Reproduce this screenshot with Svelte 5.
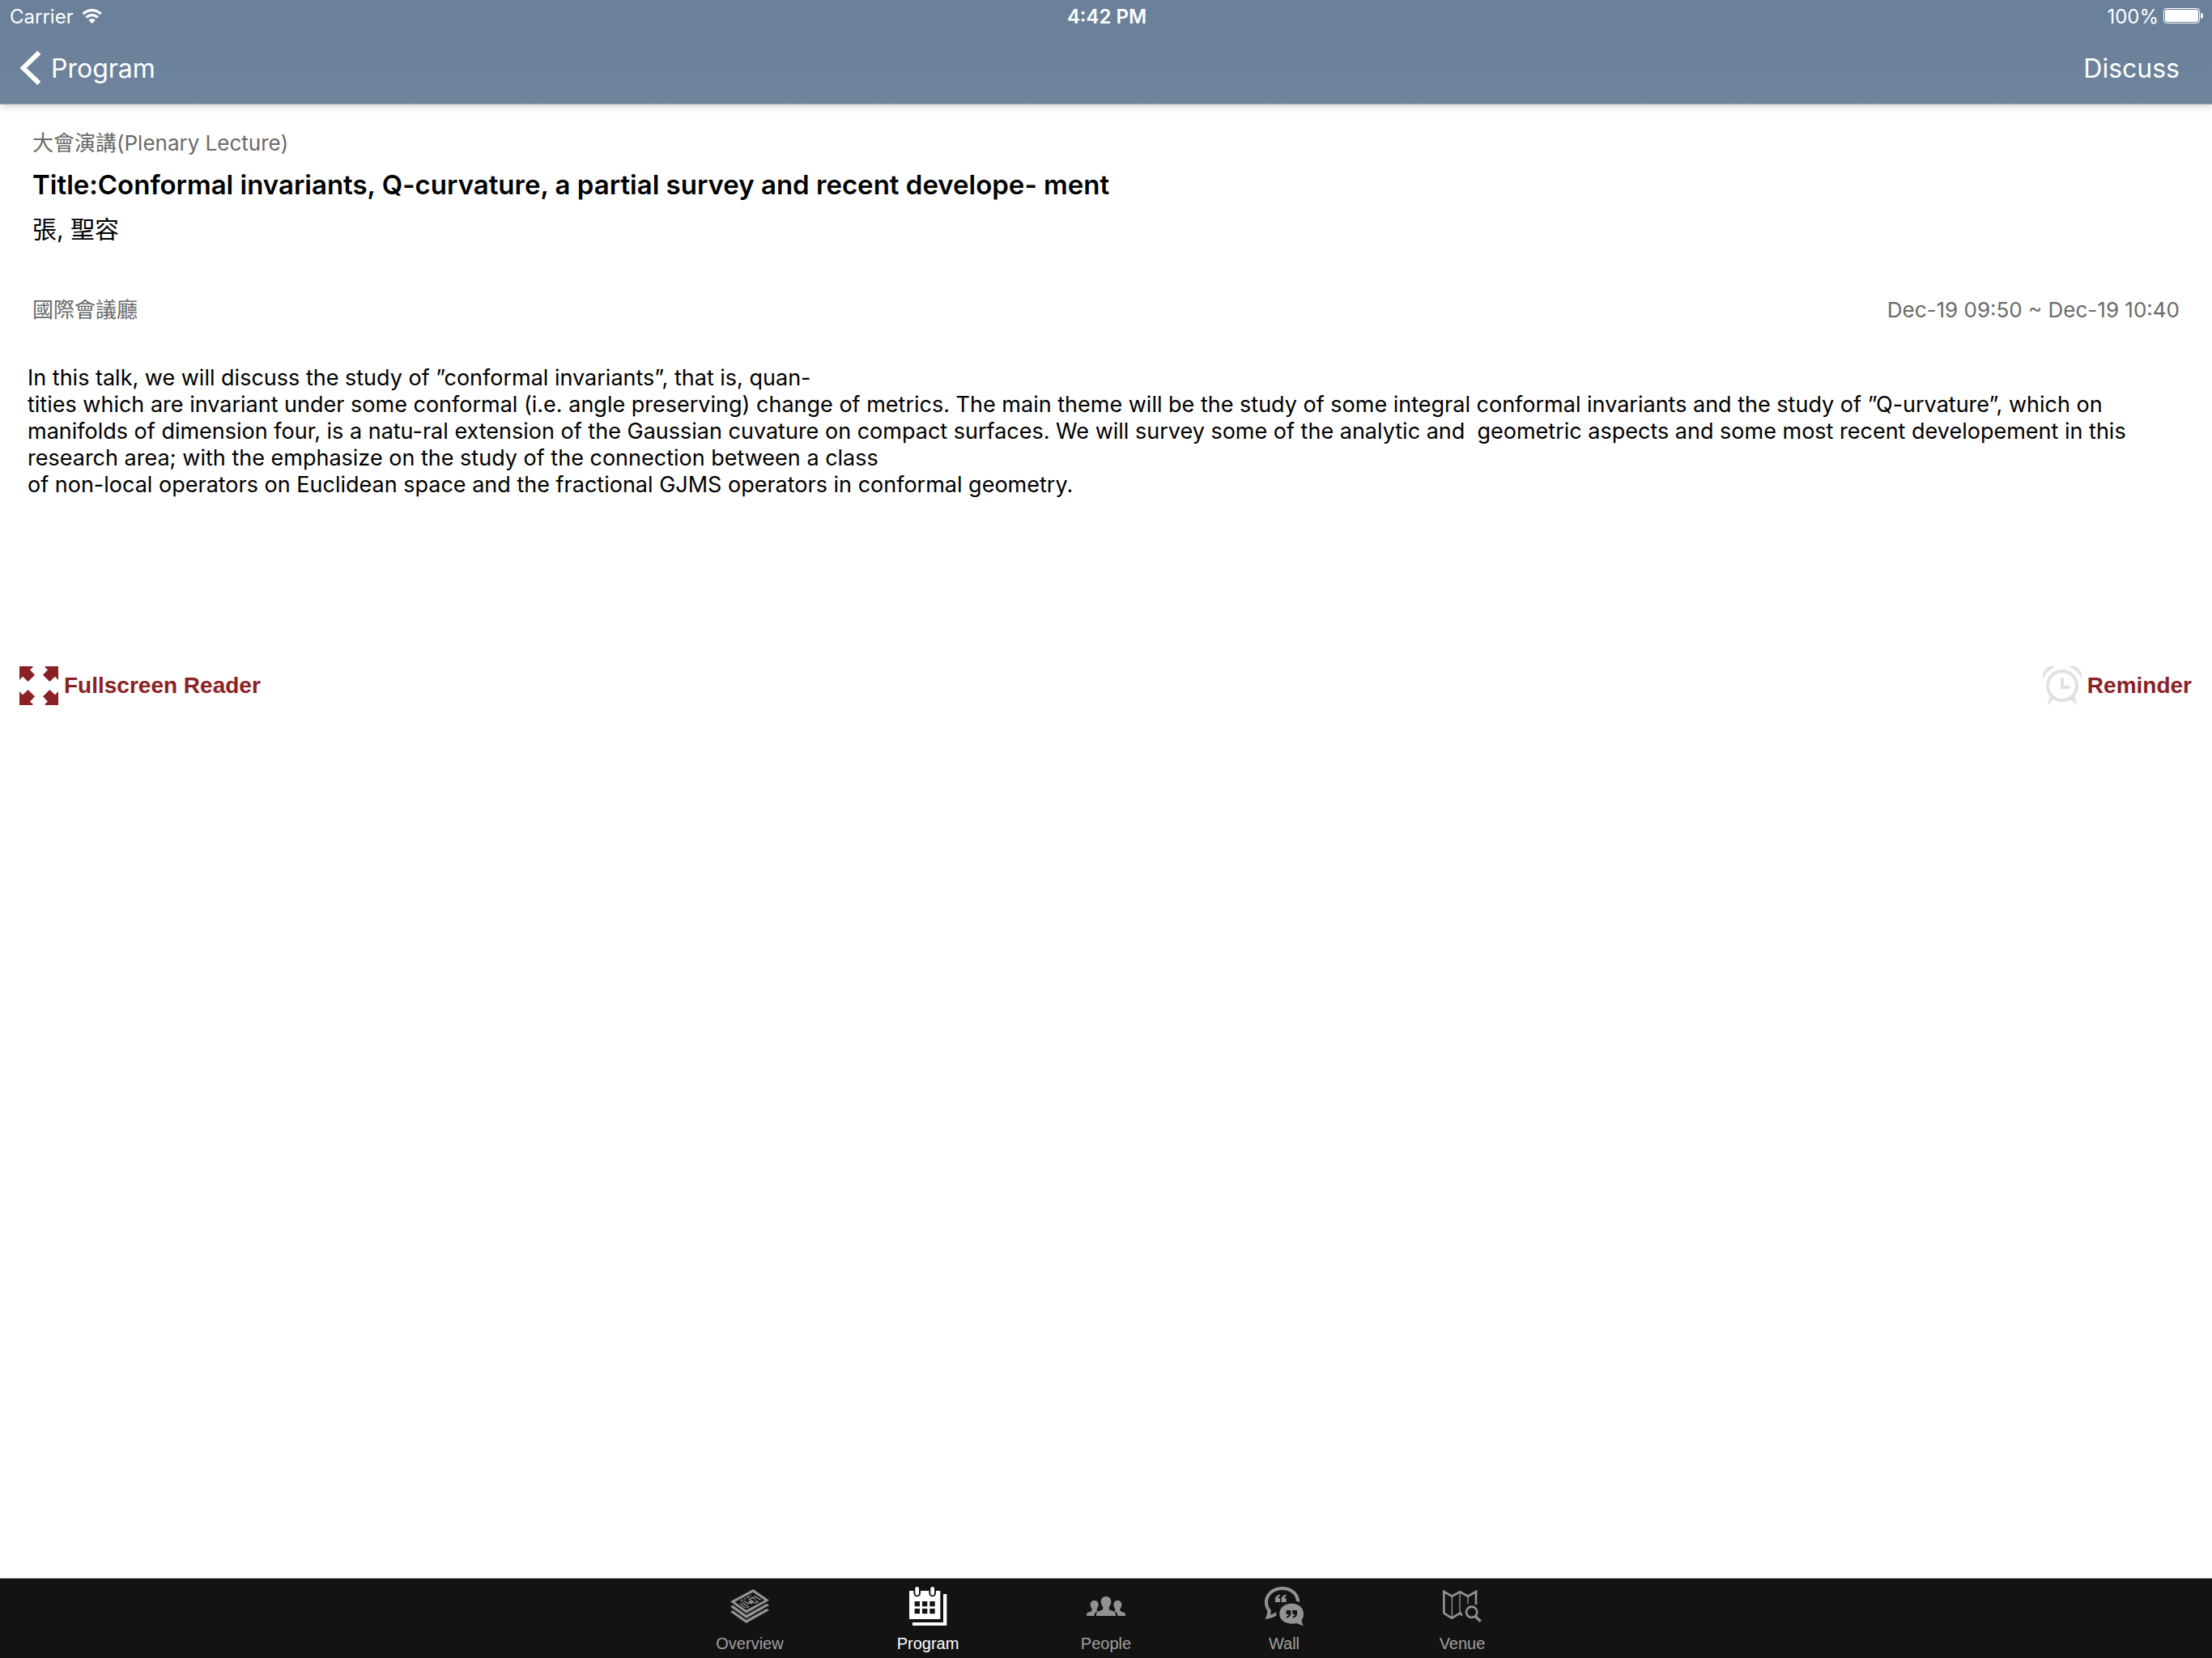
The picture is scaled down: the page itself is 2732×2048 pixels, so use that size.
<script>
  const tabs = ['Overview', 'Program', 'People', 'Wall', 'Venue'];
  let current = $state('Program');

  const abstract = `In this talk, we will discuss the study of ”conformal invariants”, that is, quan-
tities which are invariant under some conformal (i.e. angle preserving) change of metrics. The main theme will be the study of some integral conformal invariants and the study of ”Q-urvature”, which on manifolds of dimension four, is a natu-ral extension of the Gaussian cuvature on compact surfaces. We will survey some of the analytic and  geometric aspects and some most recent developement in this research area; with the emphasize on the study of the connection between a class
of non-local operators on Euclidean space and the fractional GJMS operators in conformal geometry.`;
</script>

<div class="screen">
  <header class="top">
    <div class="status">
      <span class="carrier">
        Carrier
        <svg class="wifi" viewBox="300 30 78 60" aria-hidden="true">
          <path d="M301 48 Q338 18 375 48 L368 55 Q338 30 308 55Z M313 61 Q338 41 363 61 L356 68 Q338 54 320 68Z M325 74 Q338 64 351 74 L338 87Z" fill="#fff" />
        </svg>
      </span>
      <span class="clock">4:42 PM</span>
      <span class="power">
        100%
        <svg class="battery" viewBox="0 0 50 20" aria-hidden="true">
          <rect x="0.5" y="0.5" width="44" height="18" rx="3" fill="none" stroke="#fff" />
          <rect x="2" y="2" width="41" height="15" rx="2" fill="#fff" />
          <path d="M46 6 q3 0 3 3.5 t-3 3.5z" fill="#fff" />
        </svg>
      </span>
    </div>
    <nav class="nav">
      <button class="back" type="button">
        <svg viewBox="72 186 80 132" aria-hidden="true">
          <path d="M138 188 L151 201 L98 252 L151 302 L138 315 L73 252Z" fill="#fff" />
        </svg>
        Program
      </button>
      <button type="button">Discuss</button>
    </nav>
  </header>

  <main>
    <section class="info">
      <p class="muted">大會演講(Plenary Lecture)</p>
      <h1>Title:Conformal invariants, Q-curvature, a partial survey and recent develope- ment</h1>
      <p class="author">張, 聖容</p>
      <div class="where">
        <p class="muted">國際會議廳</p>
        <p class="muted">Dec-19 09:50 ~ Dec-19 10:40</p>
      </div>
    </section>
    <p class="abstract">{abstract}</p>
    <div class="actions">
      <button type="button">
        <svg viewBox="72 69 144 144" aria-hidden="true">
          <g fill="#8a2225">
            <path d="M72 69 H119 L123 72 L111 82 L129 101 L104 126 L84 107 L72 120Z" />
            <path d="M216 69 H169 L165 72 L177 82 L159 101 L184 126 L204 107 L216 120Z" />
            <path d="M72 213 H119 L123 210 L111 200 L129 181 L104 156 L84 175 L72 162Z" />
            <path d="M216 213 H169 L165 210 L177 200 L159 181 L184 156 L204 175 L216 162Z" />
          </g>
        </svg>
        Fullscreen Reader
      </button>
      <button type="button">
        <svg viewBox="126 69 144 144" aria-hidden="true">
          <circle cx="198" cy="141" r="54" fill="none" stroke="#e1e1e1" stroke-width="12" />
          <path d="M192 111 H204 V141 H228 V153 H192Z" fill="#e1e1e1" />
          <path d="M127 114 C120 84 148 60 171 71 Q142 84 127 114Z M269 114 C276 84 248 60 225 71 Q254 84 269 114Z" fill="#e1e1e1" />
          <path d="M153 176 L169 190 L144 213 V208Z M243 176 L227 190 L252 213 V208Z" fill="#e1e1e1" />
        </svg>
        Reminder
      </button>
    </div>
  </main>

  <nav class="tabs">
    {#each tabs as tab}
      <button type="button" class:active={tab === current} onclick={() => (current = tab)}>
        {#if tab === 'Overview'}
          <svg viewBox="120 57 150 150" aria-hidden="true">
            <path fill="currentColor" fill-rule="evenodd" d="M208 69 L267 110 L182 158 L123 115Z M207 80 L140 116 L182 146 L250 110Z" />
            <path fill="currentColor" d="M123 134 L132 128 L182 164 L258 122 L267 128 L182 177Z M123 153 L132 148 L182 183 L258 141 L267 147 L182 195Z" />
            <path fill="none" stroke="currentColor" stroke-width="4" d="M159 122 L179 137 M167 118 L187 132 M190 109 L206 100 M204 98 L216 106 M211 94 L236 109 M182 138 L192 133 M212 122 L224 115 M174 113 L192 124 M216 111 L228 118" />
            <path fill="currentColor" d="M188 116 L201 108 L213 117 L200 125Z" />
            <path fill="none" stroke="currentColor" stroke-width="3" d="M160 111 L166 115 L165 107 L172 111 M173 103 L179 107 M176 101 L181 105 M183 98 L190 102 L188 95 L196 99 M195 91 L201 95" />
          </svg>
        {:else if tab === 'Program'}
          <svg viewBox="780 57 150 150" aria-hidden="true">
            <path fill="currentColor" d="M786 75 H802 V84 Q804 97 815 97 Q826 97 828 84 V75 H859 V84 Q861 97 872 97 Q883 97 885 84 V75 H901 V180 H786Z M912 87 H925 V204 H798 V192 H912Z" />
            <rect x="808" y="60" width="14" height="32" rx="7" fill="currentColor" />
            <rect x="865" y="60" width="14" height="32" rx="7" fill="currentColor" />
            <path fill="#131313" d="M806 114h19v19h-19z M834 114h19v19h-19z M862 114h19v19h-19z M806 141h19v19h-19z M834 141h19v19h-19z M862 141h19v19h-19z" />
          </svg>
        {:else if tab === 'People'}
          <svg viewBox="30 27 150 150" aria-hidden="true">
            <path fill="currentColor" d="M105 66 C117 66 124 74 124 85 C124 95 119 101 116 106 V111 C116 121 141 117 141 131 V138 H69 V131 C69 117 94 121 94 111 V106 C91 101 86 95 86 85 C86 74 93 66 105 66Z" />
            <path fill="currentColor" d="M62 81 C71 81 77 87 77 96 C77 104 73 109 71 113 V117 C71 120 74 121 76 121 C66 124 62 128 62 138 H33 V132 C33 122 53 125 53 117 V113 C51 109 47 104 47 96 C47 87 53 81 62 81Z" />
            <path fill="currentColor" d="M148 81 C139 81 133 87 133 96 C133 104 137 109 139 113 V117 C139 120 136 121 134 121 C144 124 148 128 148 138 H177 V132 C177 122 157 125 157 117 V113 C159 109 163 104 163 96 C163 87 157 81 148 81Z" />
          </svg>
        {:else if tab === 'Wall'}
          <svg viewBox="693 27 150 150" aria-hidden="true">
            <path fill="currentColor" d="M826 87 C824 52 797 30 761 30 C724 30 696 55 696 88 C696 103 701 113 706 119 C706 132 702 142 697 150 C713 149 728 143 739 137 L738 123 C732 129 725 132 717 134 C720 126 719 118 718 115 C711 108 708 99 708 88 C708 61 731 42 761 42 C789 42 811 58 813 83 Q820 84 826 87Z" />
            <path fill="currentColor" d="M753 59 V64 Q746 66 746 73 H753 V87 H735 V75 Q735 61 753 59Z M776 59 V64 Q769 66 769 73 H776 V87 H758 V75 Q758 61 776 59Z" />
            <path fill="currentColor" fill-rule="evenodd" d="M796 92 C822 92 840 107 840 130 C840 142 837 148 833 152 C833 161 836 168 840 174 C830 173 822 169 815 165 Q806 167 796 167 C769 167 751 152 751 130 C751 107 769 92 796 92Z M776 117 V132 H785 Q785 138 777 140 V146 Q793 143 793 130 V117Z M799 117 V132 H808 Q808 138 800 140 V146 Q816 143 816 130 V117Z" />
          </svg>
        {:else}
          <svg viewBox="30 27 150 150" aria-hidden="true">
            <path fill="none" stroke="currentColor" stroke-width="8" d="M37 129 V48 L67 65 L96 49 L126 65 L156 48 V96 M37 128 L66 146 L98 127 L104 137" />
            <path fill="none" stroke="currentColor" stroke-width="4" d="M67 62 V144 M96 50 V128 M126 64 V94" />
            <circle cx="140" cy="124" r="20" fill="none" stroke="currentColor" stroke-width="8" />
            <path fill="none" stroke="currentColor" stroke-width="10" d="M155 141 L173 158" />
          </svg>
        {/if}
        <span>{tab}</span>
      </button>
    {/each}
  </nav>
</div>

<style>
  :global(body) {
    margin: 0;
    background: #fff;
  }
  .screen {
    display: flex;
    flex-direction: column;
    min-height: 100vh;
    font-family: Inter, 'Noto Sans CJK TC', sans-serif;
    color: #000;
  }
  button {
    display: flex;
    align-items: center;
    padding: 0;
    border: 0;
    background: none;
    font: inherit;
    color: inherit;
    cursor: pointer;
  }
  p,
  h1 {
    margin: 0;
  }
  .top {
    background: linear-gradient(#6a8099, #6e849c);
    border-bottom: 1px solid #a0a0a0;
    box-shadow: 0 2px 10px rgba(0, 0, 0, 0.2);
    color: #fff;
  }
  .status {
    display: grid;
    grid-template-columns: 1fr auto 1fr;
    align-items: center;
    height: 40px;
    padding: 0 10px 0 12px;
    font-size: 24px;
  }
  .carrier,
  .power {
    display: flex;
    align-items: center;
    gap: 10px;
  }
  .power {
    justify-content: flex-end;
    gap: 6px;
  }
  .clock {
    font-weight: 600;
  }
  .wifi {
    width: 26px;
    height: 20px;
  }
  .battery {
    width: 50px;
    height: 20px;
  }
  .nav {
    display: flex;
    justify-content: space-between;
    align-items: center;
    height: 88px;
    padding: 0 40px 0 24px;
    font-size: 32px;
  }
  .back {
    gap: 12px;
  }
  .back svg {
    width: 27px;
    height: 44px;
  }
  main {
    flex: 1;
  }
  .info {
    display: flex;
    flex-direction: column;
    padding: 28px 40px 0;
  }
  .muted {
    font-size: 26px;
    line-height: 40px;
    color: #6a6a6a;
  }
  h1 {
    margin-top: 9px;
    font-size: 33px;
    line-height: 44px;
    font-weight: 600;
  }
  .author {
    margin-top: 11px;
    font-size: 30px;
    line-height: 44px;
  }
  .where {
    display: flex;
    justify-content: space-between;
    margin-top: 58px;
  }
  .abstract {
    padding: 47px 34px 0;
    font-size: 27px;
    line-height: 33px;
    white-space: pre-wrap;
  }
  .actions {
    display: flex;
    justify-content: space-between;
    margin-top: 208px;
    padding: 0 25px 0 24px;
    font-family: 'Liberation Sans', sans-serif;
    font-size: 28px;
    font-weight: 700;
    color: #8a2225;
  }
  .actions button {
    gap: 7px;
  }
  .actions svg {
    width: 48px;
    height: 48px;
  }
  .tabs {
    display: flex;
    justify-content: center;
    border-top: 1px solid #a8a8a8;
    background: #131313;
    font-family: 'Liberation Sans', sans-serif;
    font-size: 20px;
    color: #929292;
  }
  .tabs button {
    flex-direction: column;
    gap: 10px;
    width: 220px;
    height: 98px;
    padding-top: 9px;
  }
  .tabs span {
    color: #a0a0a0;
  }
  .tabs .active,
  .tabs .active span {
    color: #fff;
  }
  .tabs svg {
    width: 50px;
    height: 50px;
  }
</style>
